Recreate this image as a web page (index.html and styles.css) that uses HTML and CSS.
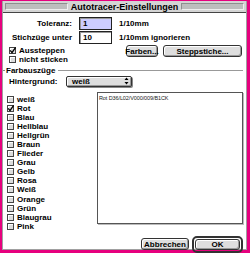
FILE: index.html
```html
<!DOCTYPE html>
<html>
<head>
<meta charset="utf-8">
<link rel="stylesheet" href="styles.css">
</head>
<body>
<div class="window">
  <div class="titlebar">
    <span class="stripes"></span>
    <span class="title">Autotracer-Einstellungen</span>
    <span class="stripes"></span>
  </div>
  <div class="body">
    <div class="fields">
      <span class="lbl">Toleranz:</span><span class="field sel">1</span><span class="unit">1/10mm</span>
      <span class="lbl">Stichzüge unter</span><span class="field">10</span><span class="unit">1/10mm ignorieren</span>
    </div>
    <div class="optrow">
      <div class="opts">
        <div class="cb checked"><span class="box"><svg viewBox="0 0 7 7" width="7" height="7"><path d="M1.2 3.4 L3 5.6 L6.6 0.4" fill="none" stroke="#000" stroke-width="1.3"/></svg></span>Aussteppen</div>
        <div class="cb"><span class="box"></span>nicht sticken</div>
      </div>
      <div class="btns">
        <span class="btn farben">Farben...</span>
        <span class="btn stepp">Steppstiche...</span>
      </div>
    </div>
    <div class="legend"><span class="legtext">Farbauszüge</span></div>
    <div class="hrow">
      <span class="hlbl">Hintergrund:</span>
      <span class="popup"><span class="ptext">weiß</span><span class="parrow"><svg viewBox="0 0 5 8" width="5" height="8"><path d="M2.5 0.5 L4.5 3 L0.5 3 Z M0.5 5 L4.5 5 L2.5 7.5 Z" fill="#000"/></svg></span></span>
    </div>
    <div class="main">
      <div class="checklist">
        <div class="cb"><span class="box"></span>weiß</div>
        <div class="cb checked"><span class="box"><svg viewBox="0 0 7 7" width="7" height="7"><path d="M1.2 3.4 L3 5.6 L6.6 0.4" fill="none" stroke="#000" stroke-width="1.3"/></svg></span>Rot</div>
        <div class="cb"><span class="box"></span>Blau</div>
        <div class="cb"><span class="box"></span>Hellblau</div>
        <div class="cb"><span class="box"></span>Hellgrün</div>
        <div class="cb"><span class="box"></span>Braun</div>
        <div class="cb"><span class="box"></span>Flieder</div>
        <div class="cb"><span class="box"></span>Grau</div>
        <div class="cb"><span class="box"></span>Gelb</div>
        <div class="cb"><span class="box"></span>Rosa</div>
        <div class="cb"><span class="box"></span>Weiß</div>
        <div class="cb"><span class="box"></span>Orange</div>
        <div class="cb"><span class="box"></span>Grün</div>
        <div class="cb"><span class="box"></span>Blaugrau</div>
        <div class="cb"><span class="box"></span>Pink</div>
      </div>
      <div class="listbox">Rot D36/L02/V000/009/B1CK</div>
    </div>
    <div class="bottom">
      <span class="btn cancel">Abbrechen</span>
      <span class="okring"><span class="btn ok">OK</span></span>
    </div>
  </div>
</div>
</body>
</html>
```

FILE: styles.css
```css
* { box-sizing: border-box; margin: 0; padding: 0; }
html, body { width: 250px; height: 253px; overflow: hidden; }
body {
  background: #e6007e;
  font-family: "Liberation Sans", Arial, sans-serif;
  font-weight: bold;
  font-size: 8px;
  color: #000;
  padding: 1px 3px 3px 2px;
}
.window {
  width: 245px;
  height: 249px;
  background: #fff;
  display: flex;
  flex-direction: column;
  border: 1px solid #a0a0a0;
  border-top: none;
}
.titlebar {
  height: 12px;
  flex: none;
  background: #d4d4d4;
  border-bottom: 1px solid #444;
  display: flex;
  align-items: center;
  padding: 0 2px;
}
.stripes {
  flex: 1;
  height: 7px;
  background: #bdbdbd;
  border-top: 1px solid #8e8e8e;
  border-left: 1px solid #8e8e8e;
  border-bottom: 1px solid #efefef;
  border-right: 1px solid #efefef;
}
.title {
  padding: 0 3px;
  line-height: 10px;
  font-size: 9px;
}
.body {
  flex: 1;
  display: flex;
  flex-direction: column;
  padding-top: 4px;
}
.fields {
  display: grid;
  grid-template-columns: 69px 33px auto;
  grid-auto-rows: 13px;
  column-gap: 7px;
  row-gap: 1px;
  align-items: center;
}
.lbl { text-align: right; }
.field {
  height: 13px;
  border: 1px solid #222;
  box-shadow: inset 1px 1px #999;
  padding-left: 3px;
  line-height: 11px;
}
.field.sel { background: #ccccff; }
.optrow {
  display: flex;
  justify-content: space-between;
  align-items: flex-start;
  margin-top: 1px;
  padding: 0 4px 0 6px;
}
.opts { padding-top: 0.5px; }
.opts .cb { line-height: 9.5px; height: 9.5px; }
.cb {
  display: flex;
  align-items: center;
  gap: 2px;
  white-space: nowrap;
}
.box {
  width: 7px;
  height: 7px;
  flex: none;
  background: #dcdcdc;
  border: 1px solid #444;
  box-shadow: inset 1px 1px #fff;
  position: relative;
  margin-right: 1px;
}
.box svg { position: absolute; left: -1px; top: -1px; }
.btns { display: flex; gap: 5px; }
.btn {
  display: inline-flex;
  align-items: center;
  justify-content: center;
  height: 12px;
  background: #dedede;
  border: 1px solid #333;
  border-radius: 3px;
  box-shadow: inset 1px 1px #fff, inset -1px -1px #999;
}
.farben { width: 32px; }
.stepp { width: 79px; }
.legend {
  display: flex;
  align-items: center;
  height: 8px;
  margin-top: 2px;
  padding-right: 3px;
}
.legend::before {
  content: "";
  width: 2px;
  height: 1px;
  background: #888;
}
.legend::after {
  content: "";
  flex: 1;
  height: 1px;
  background: #999;
  margin-left: 3px;
}
.legtext { padding-left: 1px; }
.hrow {
  display: flex;
  align-items: center;
  height: 11px;
  margin-top: 1px;
  padding-left: 6px;
}
.hlbl { width: 57px; }
.popup {
  width: 66px;
  height: 11px;
  display: flex;
  align-items: center;
  justify-content: space-between;
  background: #dedede;
  border: 1px solid #333;
  border-radius: 2px;
  box-shadow: inset 1px 1px #fff, inset -1px -1px #999, 1px 1px #888;
}
.ptext { padding-left: 5px; }
.parrow {
  width: 9px;
  height: 9px;
  display: flex;
  align-items: center;
  justify-content: center;
}
.main {
  display: flex;
  margin-top: 5px;
  padding-left: 4px;
}
.checklist {
  width: 90px;
  padding-top: 3px;
}
.checklist .cb { height: 9.1px; line-height: 9.1px; }
.listbox {
  width: 146px;
  height: 132px;
  border: 1px solid #555;
  box-shadow: 1px 1px #bbb;
  font-family: "Liberation Sans", Arial, sans-serif;
  font-weight: normal;
  font-size: 5.5px;
  color: #222;
  padding: 2px 1px;
  line-height: 6px;
  letter-spacing: -0.1px;
}
.bottom {
  display: flex;
  justify-content: flex-end;
  align-items: center;
  gap: 3px;
  margin-top: 5px;
  padding-right: 3px;
  height: 17px;
}
.cancel { width: 48px; height: 12px; }
.okring {
  display: flex;
  border: 2px solid #333;
  border-radius: 5px;
  padding: 1px;
}
.ok { width: 45px; height: 11px; }
```
